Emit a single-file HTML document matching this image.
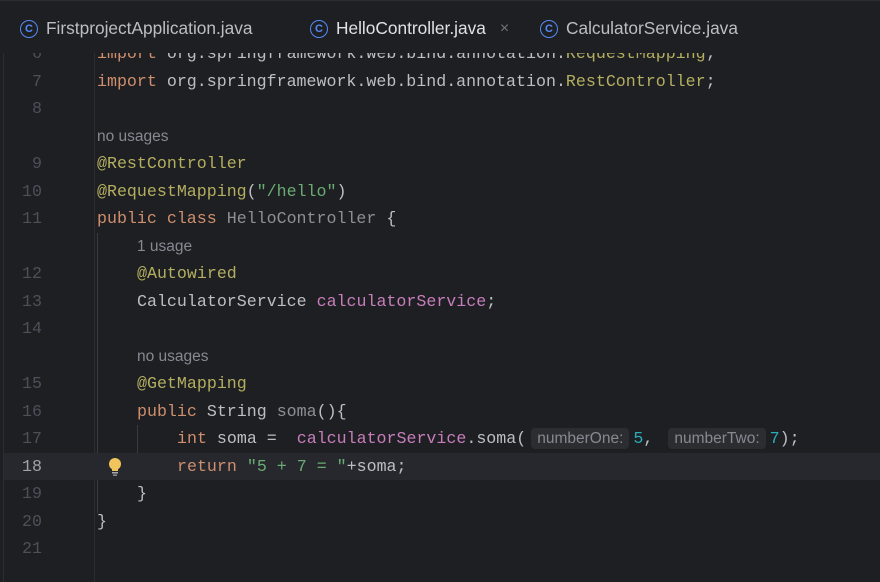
<!DOCTYPE html>
<html><head><meta charset="utf-8"><style>
*{margin:0;padding:0;box-sizing:border-box}
body{width:880px;height:582px;background:#1e1f22;overflow:hidden;position:relative;font-family:"Liberation Sans",sans-serif}
.tabs{position:absolute;left:0;top:0;width:880px;height:52px;border-bottom:1px solid #393b40;border-top:1px solid #2b2d30}
.tab{position:absolute;top:17px;font-size:17.3px;color:#bcbec4;white-space:nowrap;display:flex;align-items:center}
.ic{width:18px;height:18px;border:1.6px solid #548af7;border-radius:50%;color:#548af7;font-size:11px;display:inline-flex;align-items:center;justify-content:center;margin-right:8px;font-weight:bold}
.ul{position:absolute;left:292px;top:50px;width:233px;height:3px;background:#6f737a}
.leftbar{position:absolute;left:3px;top:52px;width:1px;height:530px;background:#2b2d30}
.gsep{position:absolute;left:94px;top:52px;width:1px;height:530px;background:#2b2d30}
.row{position:absolute;left:0;width:880px;height:27.5px;line-height:27.5px;font-family:"Liberation Mono",monospace;font-size:16.64px;color:#bcbec4;white-space:pre}
.row>span{top:0}
.ln{position:absolute;left:0;width:42px;text-align:right;color:#4b5059}
.code{position:absolute;left:97px}
.hint{font-family:"Liberation Sans",sans-serif;font-size:15.5px;color:#868991}
.k{color:#cf8e6d}.a{color:#b3ae60}.s{color:#6aab73}.n{color:#2aacb8}.f{color:#c77dbb}.g{color:#8c8f96}
.ih{font-family:"Liberation Sans",sans-serif;font-size:15.5px;color:#868991;background:#2b2d30;border-radius:4px;padding:2px 6px;margin:0 4px 0 5px}
.cur{background:#26282e}
.guide{position:absolute;width:1px;background:#393b40}
</style></head><body>
<div class="tabs">
<div class="tab" style="left:20px"><span class="ic">C</span>FirstprojectApplication.java</div>
<div class="tab" style="left:310px;color:#dfe1e5"><span class="ic">C</span>HelloController.java<span style="color:#6f737a;margin-left:14px;font-size:16px">×</span></div>
<div class="tab" style="left:540px"><span class="ic">C</span>CalculatorService.java</div>
</div>
<div class="ul"></div>
<div class="leftbar"></div>
<div class="gsep"></div>
<div class="guide" style="left:97px;top:233px;height:280px"></div>
<div class="guide" style="left:137px;top:425px;height:55px"></div>
<div class="row" style="top:40px"><span class="ln">6</span><span class="code"><span class="k">import</span> org.springframework.web.bind.annotation.<span class="a">RequestMapping</span>;</span></div>
<div style="position:absolute;left:0;top:40px;width:880px;height:13px;background:#1e1f22"></div>
<div class="row" style="top:67.5px"><span class="ln">7</span><span class="code"><span class="k">import</span> org.springframework.web.bind.annotation.<span class="a">RestController</span>;</span></div>
<div class="row" style="top:95px"><span class="ln">8</span></div>
<div class="row" style="top:122.5px"><span class="code hint">no usages</span></div>
<div class="row" style="top:150px"><span class="ln">9</span><span class="code a">@RestController</span></div>
<div class="row" style="top:177.5px"><span class="ln">10</span><span class="code"><span class="a">@RequestMapping</span>(<span class="s">"/hello"</span>)</span></div>
<div class="row" style="top:205px"><span class="ln">11</span><span class="code"><span class="k">public class</span> <span class="g">HelloController</span> {</span></div>
<div class="row" style="top:232.5px"><span class="code hint" style="left:137px">1 usage</span></div>
<div class="row" style="top:260px"><span class="ln">12</span><span class="code a" style="left:137px">@Autowired</span></div>
<div class="row" style="top:287.5px"><span class="ln">13</span><span class="code" style="left:137px">CalculatorService <span class="f">calculatorService</span>;</span></div>
<div class="row" style="top:315px"><span class="ln">14</span></div>
<div class="row" style="top:342.5px"><span class="code hint" style="left:137px">no usages</span></div>
<div class="row" style="top:370px"><span class="ln">15</span><span class="code a" style="left:137px">@GetMapping</span></div>
<div class="row" style="top:397.5px"><span class="ln">16</span><span class="code" style="left:137px"><span class="k">public</span> String <span class="g">soma</span>(){</span></div>
<div class="row" style="top:425px"><span class="ln">17</span><span class="code" style="left:177px"><span class="k">int</span> soma =  <span class="f">calculatorService</span>.soma(<span class="ih">numberOne:</span><span class="n">5</span>, <span class="ih">numberTwo:</span><span class="n">7</span>);</span></div>
<div class="row cur" style="top:452.5px;left:4px;width:876px"><span class="ln" style="left:-4px;color:#a1a3ab">18</span><svg style="position:absolute;left:103px;top:4px" width="16" height="20" viewBox="0 0 16 20"><circle cx="8" cy="7" r="6" fill="#f2c55c"/><rect x="5" y="11" width="6" height="3" fill="#f2c55c"/><rect x="5" y="15" width="6" height="1.5" fill="#aaa"/><rect x="6" y="17.5" width="4" height="1.2" fill="#aaa"/></svg><span class="code" style="left:173px"><span class="k">return</span> <span class="s">"5 + 7 = "</span>+soma;</span></div>
<div class="row" style="top:480px"><span class="ln">19</span><span class="code" style="left:137px">}</span></div>
<div class="row" style="top:507.5px"><span class="ln">20</span><span class="code">}</span></div>
<div class="row" style="top:535px"><span class="ln">21</span></div>
</body></html>
